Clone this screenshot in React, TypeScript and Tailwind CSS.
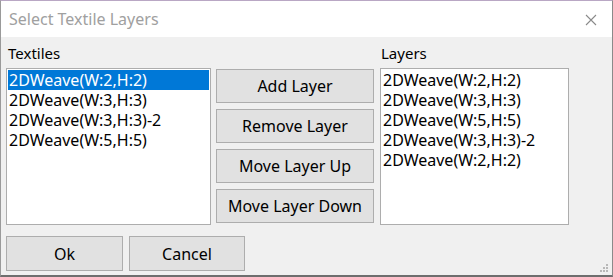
import * as React from 'react';

const textiles = ['2DWeave(W:2,H:2)', '2DWeave(W:3,H:3)', '2DWeave(W:3,H:3)-2', '2DWeave(W:5,H:5)'];
const layers = ['2DWeave(W:2,H:2)', '2DWeave(W:3,H:3)', '2DWeave(W:5,H:5)', '2DWeave(W:3,H:3)-2', '2DWeave(W:2,H:2)'];

const font = { fontFamily: '"Noto Sans", "Open Sans", sans-serif' };

function ListBox({ items, selected }: { items: string[]; selected?: number }) {
  return (
    <div className="h-[157px] bg-white border border-[#adadad] p-px overflow-hidden">
      {items.map((item, i) => (
        <div
          key={i}
          className={`h-5 leading-5 pl-px text-[16px] whitespace-nowrap ${
            i === selected ? 'bg-[#0078d7] text-white' : 'text-black'
          }`}
        >
          {item}
        </div>
      ))}
    </div>
  );
}

function DlgButton({ label, className = '' }: { label: string; className?: string }) {
  return (
    <button
      className={`bg-[#e1e1e1] border border-[#adadad] text-black text-[16px] leading-none flex items-center justify-center ${className}`}
    >
      {label}
    </button>
  );
}

export default function App() {
  return (
    <div
      className="w-[613px] h-[277px] flex flex-col bg-[#f0f0f0] border-l border-[#9a9a9a] border-r border-r-[#8a8a8a] border-t border-t-[#b9a7c4] border-b-2 border-b-[#6e6e6e] overflow-hidden relative"
      style={font}
    >
      {/* title bar */}
      <div className="h-[36px] bg-white flex items-center justify-between pl-[8px] pr-[15px] shrink-0">
        <span className="text-[16px] text-[#a0a0a0]">Select Textile Layers</span>
        <svg width="12" height="12" viewBox="0 0 12 12" className="mt-px">
          <path d="M1 1 L11 11 M11 1 L1 11" stroke="#8a8a8a" strokeWidth="1.1" />
        </svg>
      </div>

      {/* body */}
      <div className="flex-1 pl-[5px] pt-[5px]">
        <div className="flex">
          <div className="w-[205px] flex flex-col">
            <div className="h-[26px] pl-[2px] text-[15px] text-black leading-[22px]">Textiles</div>
            <ListBox items={textiles} selected={0} />
          </div>
          <div className="w-[158px] ml-[5px] pt-[27px] flex flex-col gap-[6px]">
            <DlgButton label="Add Layer" className="h-[34px]" />
            <DlgButton label="Remove Layer" className="h-[34px]" />
            <DlgButton label="Move Layer Up" className="h-[34px]" />
            <DlgButton label="Move Layer Down" className="h-[34px]" />
          </div>
          <div className="w-[189px] ml-[6px] flex flex-col">
            <div className="h-[26px] pl-[1px] text-[15px] text-black leading-[22px]">Layers</div>
            <ListBox items={layers} />
          </div>
        </div>

        <div className="flex gap-[6px] mt-[11px]">
          <DlgButton label="Ok" className="w-[117px] h-[35px]" />
          <DlgButton label="Cancel" className="w-[116px] h-[35px]" />
        </div>
      </div>

      {/* resize grip */}
      <svg width="10" height="10" viewBox="0 0 10 10" className="absolute right-[3px] bottom-[2px]">
        {[
          [8, 2],
          [8, 5],
          [5, 5],
          [8, 8],
          [5, 8],
          [2, 8],
        ].map(([x, y], i) => (
          <rect key={i} x={x - 1} y={y - 1} width="2" height="2" fill="#b8b8b8" />
        ))}
      </svg>
    </div>
  );
}
